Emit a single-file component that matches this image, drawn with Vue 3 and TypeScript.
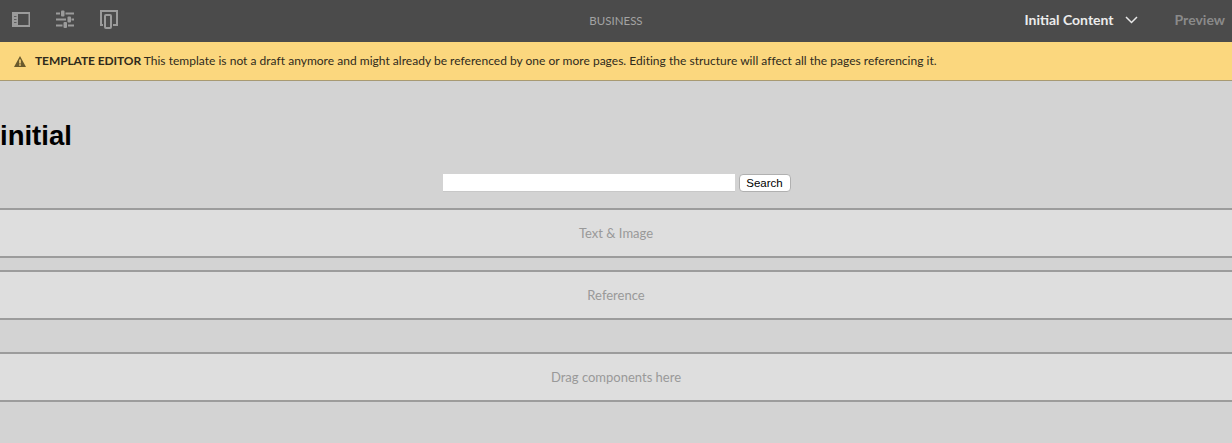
<script setup lang="ts">
const rows = [
  { label: 'Text & Image', cls: 'first' },
  { label: 'Reference', cls: 'second' },
  { label: 'Drag components here', cls: 'third' },
]
</script>

<template>
  <div class="page">
    <header class="bar">
      <div class="tools">
        <svg width="18" height="15" viewBox="0 0 18 15" class="ic"><path fill-rule="evenodd" d="M0 0h18v15H0zM6 2v11h10.500V2z" fill="#9b9b9b"/><path d="M2 4.500h2.500M2 7.500h2.500M2 10.500h2.500" stroke="#5e5e5e" stroke-width="1"/></svg>
        <svg width="18" height="18" viewBox="0 0 18 18" class="ic"><path d="M0 3.500h4M9.500 3.500H18M0 9.500h10M15.500 9.500H18M0 15.500h6.500M12 15.500h6" stroke="#9b9b9b" stroke-width="2" fill="none"/><rect x="5" y="0.500" width="3.500" height="6" rx="1" fill="#9b9b9b"/><rect x="11.500" y="6.500" width="3.500" height="6" rx="1" fill="#9b9b9b"/><rect x="7.500" y="12" width="3.500" height="6" rx="1" fill="#9b9b9b"/></svg>
        <svg width="18" height="19" viewBox="0 0 18 19" class="ic"><path d="M3 15H1V1h16v14h-4" fill="none" stroke="#9b9b9b" stroke-width="2"/><rect x="5" y="5" width="6" height="13" rx="1" fill="none" stroke="#9b9b9b" stroke-width="2"/></svg>
      </div>
      <div class="title">BUSINESS</div>
      <div class="right">
        <span class="mode">Initial Content</span>
        <svg width="13" height="8" viewBox="0 0 13 8" class="chev"><path d="M1 1l5.500 5.500L12 1" fill="none" stroke="#e8e8e8" stroke-width="1.500"/></svg>
        <span class="preview">Preview</span>
      </div>
    </header>
    <div class="notice">
      <svg width="12" height="11" viewBox="0 0 12 11" class="warn"><path fill-rule="evenodd" d="M6 0l6 11H0zM5.200 3.500v4h1.600v-4zM5.200 8.200v1.500h1.600V8.200z" fill="#6a5a2c"/></svg>
      <span class="msg"><b>TEMPLATE EDITOR</b> This template is not a draft anymore and might already be referenced by one or more pages. Editing the structure will affect all the pages referencing it.</span>
    </div>
    <main class="content">
      <h1 class="heading">initial</h1>
      <form class="search" @submit.prevent>
        <input type="text" class="field" />
        <button class="btn">Search</button>
      </form>
      <div v-for="r in rows" :key="r.label" class="row" :class="r.cls">{{ r.label }}</div>
    </main>
  </div>
</template>

<style>
html, body { margin: 0; padding: 0; }
</style>

<style scoped>
.page { width: 1232px; height: 443px; overflow: hidden; background: #d3d3d3; font-family: Lato, "Open Sans", "Liberation Sans", sans-serif; }
.bar { height: 42px; background: #4b4b4b; display: grid; grid-template-columns: 1fr auto 1fr; align-items: center; }
.tools { display: flex; align-items: center; gap: 26px; padding-left: 12px; margin-top: -4px; }
.ic { display: block; }
.title { font-size: 11.5px; color: #a3a3a3; margin-top: -1px; }
.right { display: flex; align-items: center; justify-content: flex-end; padding-right: 7px; font-size: 14px; font-weight: 700; margin-top: -3px; }
.mode { color: #ececec; }
.chev { margin-left: 11px; margin-top: 1px; }
.preview { color: #8a8a8a; margin-left: 37px; }
.notice { height: 38px; background: #fbd77e; border-bottom: 1px solid #a89a72; display: flex; align-items: center; padding-left: 14px; font-size: 12px; letter-spacing: 0.02px; color: #2f2a1c; }
.msg { margin-top: -1px; }
.warn { margin-right: 9px; }
.notice b { font-weight: 700; letter-spacing: -0.1px; }
.content { display: flex; flex-direction: column; }
.heading { margin: 39px 0 0; font: 700 27.5px/32px "Liberation Sans", Arial, sans-serif; color: #000; }
.search { display: flex; justify-content: center; align-items: center; gap: 4px; margin-top: 21px; height: 20px; padding-left: 1px; }
.field { width: 292px; height: 18px; box-sizing: border-box; background: #fff; border: 0; border-bottom: 1px solid #c8c8c8; padding: 0; margin: 0; }
.btn { width: 52px; height: 18px; box-sizing: border-box; background: #fff; border: 1px solid #b0b0b0; border-radius: 4px; font: 11.5px "Liberation Sans", Arial, sans-serif; color: #000; padding: 0; }
.row { height: 50px; box-sizing: border-box; background: #dedede; border-top: 2px solid #9c9c9c; border-bottom: 2px solid #9c9c9c; display: flex; align-items: center; justify-content: center; font-size: 13px; color: #999; }
.first { margin-top: 15px; }
.second { margin-top: 12px; }
.third { margin-top: 32px; }
</style>
